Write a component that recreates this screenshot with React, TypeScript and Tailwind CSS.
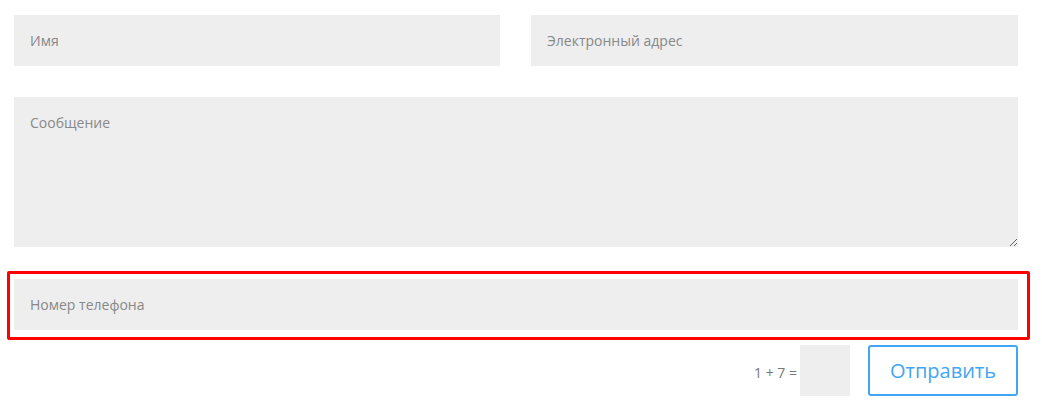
import React from "react";

export default function App() {
  const field =
    "w-full h-[51px] bg-[#eeeeee] px-4 text-[14px] text-[#555] placeholder:text-[#888] outline-none border-0";
  return (
    <div
      className="w-[1042px] h-[419px] bg-white pt-[15px] pl-[14px] pr-[24px]"
      style={{ fontFamily: '"Open Sans", "Noto Sans", sans-serif' }}
    >
      <div className="grid grid-cols-[486px_487px] gap-x-[31px]">
        <input className={field} placeholder="Имя" />
        <input className={field} placeholder="Электронный адрес" />
      </div>
      <textarea
        className="mt-[31px] block w-full h-[150px] bg-[#eeeeee] px-4 pt-[15px] text-[14px] text-[#555] placeholder:text-[#888] outline-none border-0"
        placeholder="Сообщение"
      />
      <div className="mt-[24px] ml-[-7px] mr-[-12px] border-[3px] border-[#ff0000] rounded-[2px] pl-[4px] pt-[5px] pr-[9px] pb-[7px]">
        <input className={field} placeholder="Номер телефона" />
      </div>
      <div className="mt-[5px] flex items-start justify-end">
        <span className="mt-[17px] mr-[3px] text-[14px] text-[#777]">1 + 7 =</span>
        <input className="w-[50px] h-[51px] bg-[#eeeeee] outline-none border-0" />
        <button className="ml-[18px] w-[150px] h-[51px] border-2 border-[#42a5f5] rounded-[3px] text-[#42a5f5] text-[20px] bg-white">
          Отправить
        </button>
      </div>
    </div>
  );
}
